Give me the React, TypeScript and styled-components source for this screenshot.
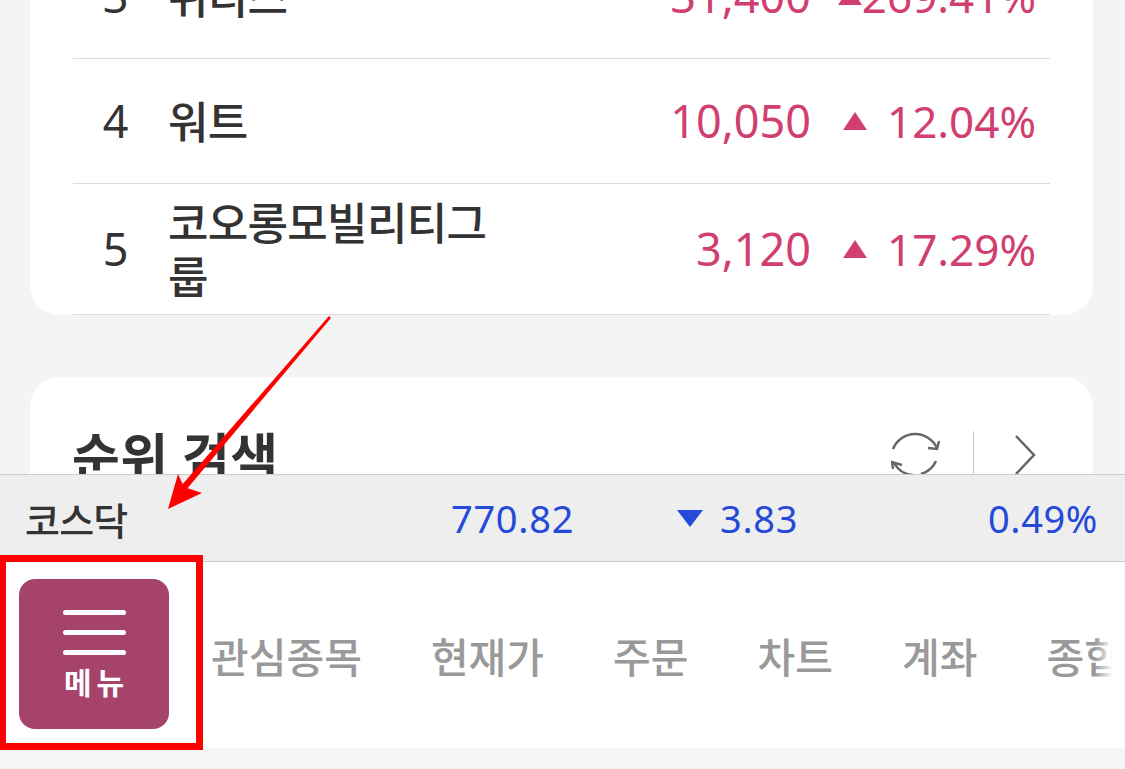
import React from 'react';
import styled, { createGlobalStyle } from 'styled-components';

const GlobalStyle = createGlobalStyle`
  html, body {
    margin: 0;
    padding: 0;
    height: 769px;
    overflow: hidden;
    background: #f5f5f7;
    font-family: 'Noto Sans', 'Noto Sans CJK KR', sans-serif;
  }
`;

const Page = styled.div`
  position: relative;
  width: 1125px;
  height: 769px;
  overflow: hidden;
`;

const Content = styled.div`
  height: 474px;
  overflow: hidden;
  background: #f4f4f4;
  padding: 0 32px 0 30px;
  box-sizing: border-box;
`;

const ListCard = styled.section`
  height: 315px;
  background: #fff;
  border-radius: 0 0 30px 30px;
  padding: 0 43px;
  overflow: hidden;
  margin-bottom: 62px;
  display: flex;
  flex-direction: column;
  justify-content: flex-end;
`;

const Row = styled.div<{ $height: number }>`
  flex: none;
  height: ${p => p.$height}px;
  box-sizing: border-box;
  border-bottom: 1px solid #dcdcdc;
  display: flex;
  align-items: center;
  font-size: 44px;
  line-height: 54px;
`;

const Rank = styled.div`
  width: 55px;
  margin: 0 25px 0 15px;
  text-align: center;
  font-size: 45px;
  color: #333;
`;

const Name = styled.div`
  width: 340px;
  padding-top: 2px;
  color: #333;
  font-weight: 500;
  letter-spacing: -0.7px;
  word-break: break-all;
`;

const Price = styled.div`
  flex: 1;
  text-align: right;
  font-size: 45px;
  color: #d03f70;
`;

const Change = styled.div<{ $gap: number }>`
  width: 239px;
  padding-right: 14px;
  box-sizing: border-box;
  display: flex;
  justify-content: flex-end;
  align-items: center;
  gap: ${p => p.$gap}px;
  color: #d03f70;
`;

const Triangle = styled.svg`
  width: 24px;
  height: 18px;
  flex: none;
`;

const TitleCard = styled.section`
  height: 200px;
  background: #fff;
  border-radius: 30px;
  padding: 48px 55px 0 42px;
  display: flex;
  align-items: flex-start;
  justify-content: space-between;
`;

const Title = styled.h2`
  margin: 2px 0 0;
  font-size: 52px;
  line-height: 60px;
  font-weight: 700;
  color: #333;
  letter-spacing: 0.3px;
`;

const Tools = styled.div`
  display: flex;
  align-items: flex-start;
  margin-top: 6px;
`;

const ToolDivider = styled.div`
  width: 1px;
  height: 60px;
  background: #ccc;
  margin: 0 40px 0 32px;
`;

const IndexBar = styled.div`
  height: 88px;
  box-sizing: border-box;
  background: #eee;
  border-top: 1px solid #ccc;
  border-bottom: 1px solid #ccc;
  display: flex;
  align-items: center;
  padding: 0 27px 0 25px;
  font-size: 38px;
`;

const IndexName = styled.div`
  width: 426px;
  color: #333;
  font-weight: 500;
  letter-spacing: -0.8px;
`;

const IndexValue = styled.div`
  width: 226px;
  color: #2549d8;
  letter-spacing: 0.7px;
`;

const IndexChange = styled.div`
  flex: 1;
  display: flex;
  align-items: center;
  gap: 17px;
  color: #2549d8;
  letter-spacing: 0.7px;
`;

const IndexRate = styled.div`
  color: #2549d8;
  letter-spacing: 0.6px;
`;

const NavBar = styled.nav`
  height: 186px;
  background: #fff;
  display: flex;
  align-items: flex-start;
  overflow: hidden;
  position: relative;
`;

const MenuButton = styled.button`
  flex: none;
  width: 150px;
  height: 150px;
  margin: 17px 42px 0 19px;
  padding: 31px 0 0;
  border: 0;
  border-radius: 16px;
  background: #a6436a;
  color: #fff;
  font-family: inherit;
  display: flex;
  flex-direction: column;
  align-items: center;
`;

const MenuLine = styled.span`
  width: 63px;
  height: 5px;
  border-radius: 3px;
  background: #fff;
  margin-bottom: 15px;
`;

const MenuLabel = styled.span`
  margin-top: -5px;
  font-size: 30px;
  line-height: 36px;
  font-weight: 700;
  letter-spacing: 5px;
  padding-left: 5px;
`;

const Tabs = styled.div`
  display: flex;
  gap: 69px;
  margin-top: 63px;
  white-space: nowrap;
`;

const Tab = styled.div`
  font-size: 41px;
  font-weight: 500;
  color: #999;
`;

const Fade = styled.div`
  position: absolute;
  top: 0;
  right: 0;
  bottom: 0;
  width: 30px;
  background: linear-gradient(to right, rgba(255, 255, 255, 0), #fff 60%);
`;

const Annotations = styled.svg`
  position: absolute;
  inset: 0;
  pointer-events: none;
`;

const rows = [
  { rank: 3, name: '위디스', price: '31,400', rate: '269.41%', height: 125, gap: 0 },
  { rank: 4, name: '워트', price: '10,050', rate: '12.04%', height: 125, gap: 20 },
  { rank: 5, name: '코오롱모빌리티그룹', price: '3,120', rate: '17.29%', height: 131, gap: 20 },
];

const tabs = ['관심종목', '현재가', '주문', '차트', '계좌', '종합'];

export default function App() {
  return (
    <Page>
      <GlobalStyle />
      <Content>
        <ListCard>
          {rows.map(row => (
            <Row key={row.rank} $height={row.height}>
              <Rank>{row.rank}</Rank>
              <Name>{row.name}</Name>
              <Price>{row.price}</Price>
              <Change $gap={row.gap}>
                <Triangle viewBox="0 0 24 18">
                  <path d="M12 0 L24 18 L0 18 Z" fill="#d03f70" />
                </Triangle>
                {row.rate}
              </Change>
            </Row>
          ))}
        </ListCard>
        <TitleCard>
          <Title>순위 검색</Title>
          <Tools>
            <svg width="50" height="50" viewBox="0 0 50 50" fill="none" stroke="#666" strokeWidth="2.5">
              <path d="M2 18 A24 24 0 0 1 46 17" />
              <path d="M37 17 L46 18 L48 10" />
              <path d="M45 30 A24 24 0 0 1 30 43" />
              <path d="M3 32 A24 24 0 0 0 22 44" />
              <path d="M2 38 L1 31 L11 34" />
            </svg>
            <ToolDivider />
            <svg width="24" height="50" viewBox="0 0 24 50" fill="none" stroke="#666" strokeWidth="2.5">
              <path d="M2 5 L20 24 L2 43" />
            </svg>
          </Tools>
        </TitleCard>
      </Content>
      <IndexBar>
        <IndexName>코스닥</IndexName>
        <IndexValue>770.82</IndexValue>
        <IndexChange>
          <svg width="26" height="17" viewBox="0 0 26 17">
            <path d="M0 0 L26 0 L13 17 Z" fill="#2549d8" />
          </svg>
          3.83
        </IndexChange>
        <IndexRate>0.49%</IndexRate>
      </IndexBar>
      <NavBar>
        <MenuButton>
          <MenuLine />
          <MenuLine />
          <MenuLine />
          <MenuLabel>메뉴</MenuLabel>
        </MenuButton>
        <Tabs>
          {tabs.map(tab => (
            <Tab key={tab}>{tab}</Tab>
          ))}
        </Tabs>
        <Fade />
      </NavBar>
      <Annotations width="1125" height="769" viewBox="0 0 1125 769">
        <path d="M329 316 L331 318 L186 490 L181 486 Z" fill="#f00" />
        <path d="M168 509 L178 474 L184 487 L202 493 Z" fill="#f00" />
        <rect x="2.5" y="558.5" width="197" height="188" fill="none" stroke="#f00" strokeWidth="7" />
      </Annotations>
    </Page>
  );
}
